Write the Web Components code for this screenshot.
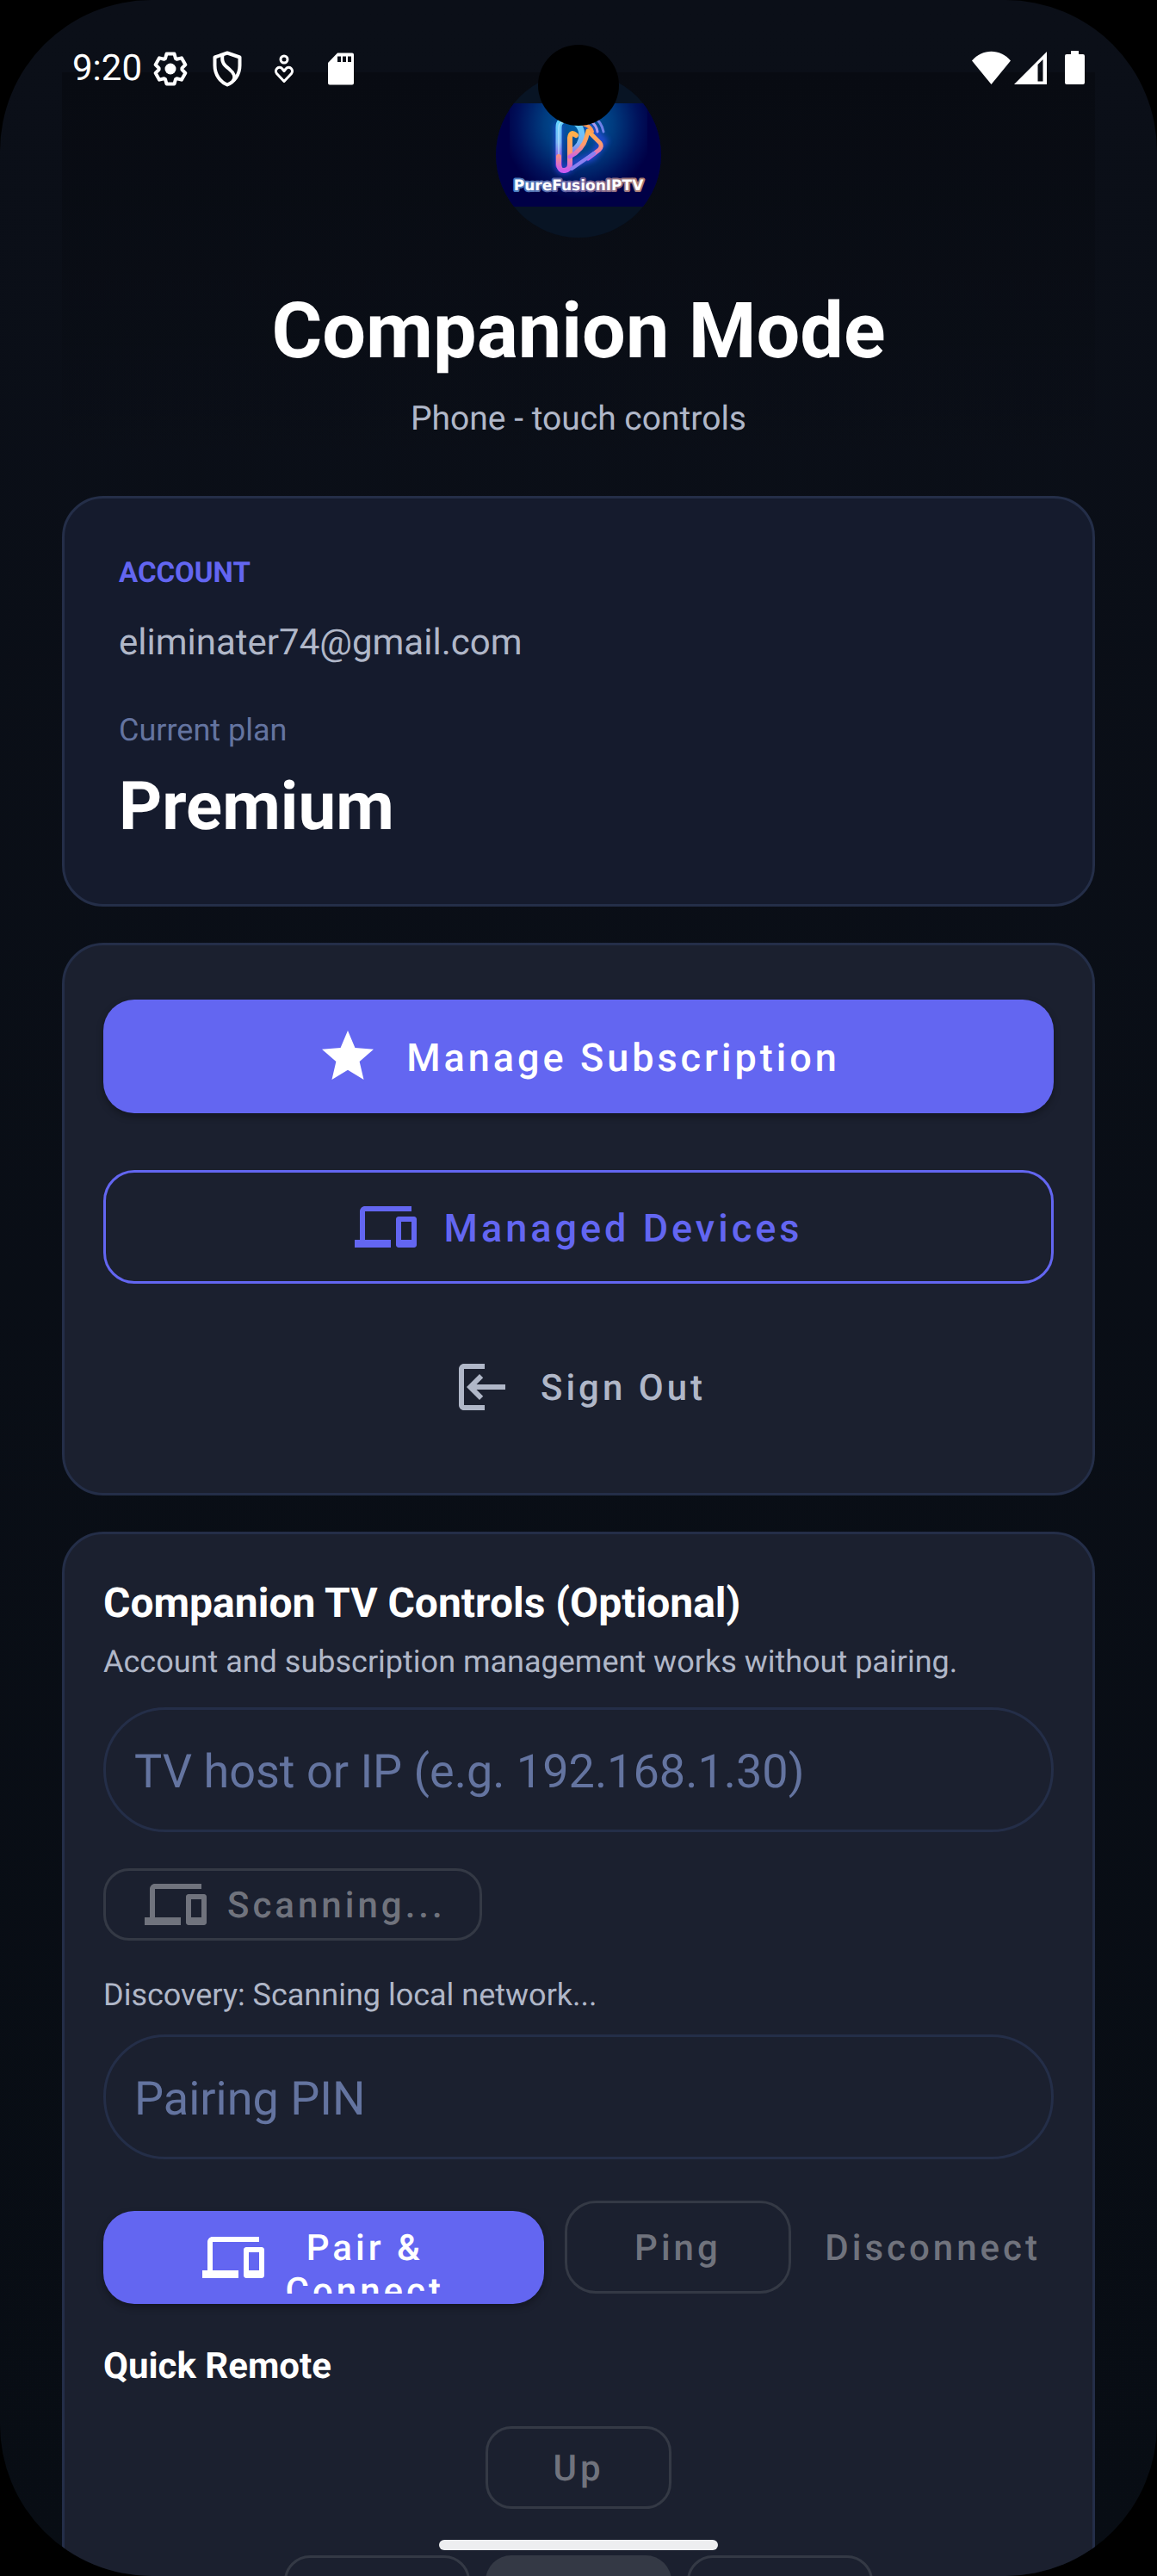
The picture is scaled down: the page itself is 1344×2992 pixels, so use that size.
<!DOCTYPE html>
<html lang="en">
<head>
<meta charset="utf-8">
<meta name="viewport" content="width=device-width, initial-scale=1">
<title>Companion Mode</title>
<style>
    html,
    body {
        margin: 0;
        height: 100%;
        background: #000;
    }

    body {
        font-family: Roboto, "Noto Sans", sans-serif;
        color: #fff;
        text-rendering: geometricPrecision;
    }
</style>
</head>
<body>
<companion-app></companion-app>

<script>
/**
 * Companion mode screen.
 *
 *   <companion-app>    the whole screen
 *   <phone-shell>      rounded display with camera, status bar and home handle
 *   <surface-card>     bordered panel, tone="account" for the bluer one
 *   <app-button>       variant: filled | outlined | text, optional icon
 *   <text-field>       pill shaped input
 *   <app-icon>         glyph by name
 */

const ICONS = {
    star: `<path d="M12 17.27 18.18 21l-1.64-7.03L22 9.24l-7.19-.61L12 2 9.19 8.63 2 9.24l5.46 4.73L5.82 21z"/>`,
    devices: `<path d="M4 6h18V4H4c-1.100 0-2 .9-2 2v11H0v3h14v-3H4V6zm19 2h-6c-.55 0-1 .45-1 1v10c0 .55.45 1 1 1h6c.55 0 1-.45 1-1V9c0-.55-.45-1-1-1zm-1 9h-4v-7h4v7z"/>`,
    logout: `<path d="M13 3H5c-1.100 0-2 .9-2 2v14c0 1.100.9 2 2 2h8v-2H5V5h8z"/><path d="M21 11H9.830l2.580-2.590L11 7l-5 5 5 5 1.410-1.410L9.830 13H21z"/>`,
};

function define(name, html, setup) {
    const template = document.createElement("template");
    template.innerHTML = html;
    customElements.define(name, class extends HTMLElement {
        constructor() {
            super();
            this.attachShadow({ mode: "open" });
            this.shadowRoot.appendChild(template.content.cloneNode(true));
        }

        connectedCallback() {
            if (setup) setup(this, this.shadowRoot);
        }
    });
}

define("app-icon", `
<style>
    :host {
        display: block;
        flex-shrink: 0;
        width: 72px;
        height: 72px;
    }

    svg {
        display: block;
        width: 100%;
        height: 100%;
        fill: currentColor;
    }
</style>
<svg viewBox="0 0 24 24" aria-hidden="true"></svg>
`, (host, root) => {
    root.querySelector("svg").innerHTML = ICONS[host.getAttribute("name")] || "";
});

define("app-button", `
<style>
    :host {
        display: block;
    }

    button {
        display: flex;
        align-items: center;
        justify-content: center;
        gap: 32px;
        box-sizing: border-box;
        width: 100%;
        height: 108px;
        margin: 0;
        padding: 0 12px;
        border: 3px solid transparent;
        border-radius: 36px;
        background: none;
        color: #b0b7c8;
        font: 500 42px/50px Roboto, sans-serif;
        letter-spacing: 4px;
        text-rendering: inherit;
    }

    .label {
        align-self: center;
        padding-top: 4px;
        overflow: hidden;
    }

    :host([size="large"]) button {
        height: 132px;
        font-size: 45px;
    }

    :host([size="small"]) button {
        height: 96px;
        border-radius: 30px;
    }

    :host([size="chip"]) button {
        height: 84px;
        gap: 24px;
        padding: 0 39px 0 45px;
        border-radius: 30px;
    }

    :host([variant="filled"]) button {
        border: 0;
        background: #6366f1;
        color: #fff;
        box-shadow: 0 4px 8px rgba(0, 0, 0, 0.3);
    }

    :host([variant="outlined"]) button {
        border-color: #6366f1;
        color: #6366f1;
    }

    :host button:disabled {
        color: #70737d;
    }

    :host([variant="outlined"]) button:disabled {
        border-color: #343945;
    }

    :host([variant="filled"]) button:disabled {
        background: #343945;
        box-shadow: none;
    }

    /* two-line label that runs out of room */
    :host([wrap]) button {
        gap: 24px;
        padding: 12px 115px;
    }

    :host([wrap]) .label {
        align-self: baseline;
        height: 84px;
        box-sizing: border-box;
        padding-top: 7px;
    }
</style>
<button type="button"><span class="label"><slot></slot></span></button>
`, (host, root) => {
    const button = root.querySelector("button");
    button.disabled = host.hasAttribute("off");
    const name = host.getAttribute("icon");
    if (name && !root.querySelector("app-icon")) {
        const icon = document.createElement("app-icon");
        icon.setAttribute("name", name);
        button.prepend(icon);
    }
});

define("text-field", `
<style>
    :host {
        display: block;
    }

    input {
        display: block;
        box-sizing: border-box;
        width: 100%;
        height: 145px;
        margin: 0;
        padding: 6px 33px 0;
        border: 3px solid #242e48;
        border-radius: 72px;
        outline: 0;
        background: none;
        color: #fff;
        font: 400 54px/64px Roboto, sans-serif;
        text-rendering: inherit;
    }

    input::placeholder {
        color: #6474a0;
        opacity: 1;
    }
</style>
<input type="text">
`, (host, root) => {
    const input = root.querySelector("input");
    input.placeholder = host.getAttribute("label");
    input.setAttribute("aria-label", host.getAttribute("label"));
});

define("surface-card", `
<style>
    :host {
        display: flex;
        flex-direction: column;
        box-sizing: border-box;
        padding: 63px 45px 69px;
        border: 3px solid #242e48;
        border-radius: 48px;
        background: #1b202f;
    }

    :host([tone="account"]) {
        padding: 67px 63px 66px;
        background: #151b2d;
    }

    :host([tone="controls"]) {
        padding-top: 52px;
    }
</style>
<slot></slot>
`);

define("app-logo", `
<style>
    :host {
        display: block;
        width: 192px;
        height: 192px;
        border-radius: 50%;
        overflow: hidden;
        background: #081424;
    }

    svg {
        display: block;
        width: 100%;
        height: 100%;
    }

    text {
        font: 700 17px "DejaVu Sans", sans-serif;
    }
</style>
<svg viewBox="0 0 192 192" role="img" aria-label="PureFusionIPTV">
    <defs>
        <radialGradient id="glow" cx="96" cy="60" r="88" gradientUnits="userSpaceOnUse">
            <stop offset="0" stop-color="#0060a8"/>
            <stop offset="0.45" stop-color="#003c80"/>
            <stop offset="0.8" stop-color="#00115a"/>
            <stop offset="1" stop-color="#000046"/>
        </radialGradient>
        <linearGradient id="cool" x1="0" y1="0" x2="0" y2="1">
            <stop offset="0" stop-color="#5fd6ff"/>
            <stop offset="0.5" stop-color="#78b4f5"/>
            <stop offset="1" stop-color="#9a2fe0"/>
        </linearGradient>
        <linearGradient id="warm" x1="0" y1="0" x2="0" y2="1">
            <stop offset="0" stop-color="#ffb04a"/>
            <stop offset="0.5" stop-color="#ff9a70"/>
            <stop offset="1" stop-color="#c95cf0"/>
        </linearGradient>
        <linearGradient id="rim" x1="0" x2="1">
            <stop offset="0" stop-color="#4a7fc0"/>
            <stop offset="0.5" stop-color="#6a5a98"/>
            <stop offset="1" stop-color="#b08070"/>
        </linearGradient>
        <filter id="halo" x="-30%" y="-30%" width="160%" height="160%">
            <feGaussianBlur stdDeviation="3"/>
        </filter>
    </defs>
    <rect y="36" width="192" height="120" fill="#000046"/>
    <rect x="16" y="36" width="160" height="120" fill="url(#glow)"/>
    <path d="M73 60v47q0 7 7 7 5-1 6-7l26-9 13-18-20-20" fill="none" stroke="#3a50ff" stroke-width="9" opacity=".6" filter="url(#halo)"/>
    <g fill="none" stroke-linecap="round" stroke-linejoin="round">
        <path d="M73 108V64q0-9 9-9 16 1 18 17 0 13-12 20" stroke="url(#cool)" stroke-width="7"/>
        <path d="M73 106V64q0-7 6-6" stroke="#c4efff" stroke-width="1"/>
        <path d="M73 98v9q1 8 7 7 6-1 6-7V76q1-8 7-3" stroke="url(#warm)" stroke-width="6"/>
        <path d="M86 98q15-8 19-22l2-8 14 14q3 4-1 8l-13 10" stroke="url(#warm)" stroke-width="5"/>
        <path d="M88 112l26-18" stroke="#8a80f0" stroke-width="4"/>
        <path d="M101 60q9 2 11 9" stroke="#ff9a55" stroke-width="4"/>
        <path d="M109 56q8 5 9 13" stroke="#a898f0" stroke-width="3"/>
        <path d="M114 52q9 6 11 17" stroke="#6e80e8" stroke-width="3"/>
    </g>
    <text x="96" y="137" text-anchor="middle" fill="#fff" stroke="url(#rim)" stroke-width="4" stroke-linejoin="round" paint-order="stroke">PureFusionIPTV</text>
</svg>
`);

define("status-bar", `
<style>
    :host {
        display: flex;
        align-items: center;
        justify-content: space-between;
        box-sizing: border-box;
        height: 160px;
        padding: 0 84px;
        font-size: 42px;
        line-height: 50px;
    }

    .group {
        display: flex;
        align-items: center;
        gap: 18px;
    }

    .right {
        gap: 0;
    }

    time {
        margin-right: -9px;
    }

    svg {
        display: block;
        height: 48px;
        fill: #fff;
    }

    .line {
        fill: none;
        stroke: #fff;
        stroke-width: 4;
        stroke-linejoin: round;
    }
</style>
<div class="group">
    <time>9:20</time>
    <svg viewBox="0 0 48 48" width="48" aria-hidden="true">
        <path class="line" d="M19.500 6.500h9L30 12l1.400.8 5.500-1.450 4.500 7.800-4 4.050v1.600l4 4.050-4.500 7.800-5.500-1.450L30 36l-1.500 5.500h-9L18 36l-1.400-.8-5.500 1.450-4.500-7.800 4-4.050v-1.600l-4-4.050 4.500-7.800 5.500 1.450L18 12z"/>
        <circle cx="24" cy="24" r="6.500"/>
    </svg>
    <svg viewBox="0 0 48 48" width="48" aria-hidden="true">
        <path class="line" d="M24 5.500 38.500 10.500V20C38.500 31 32 39 24 42.500 16 39 9.500 31 9.500 20v-9.500z"/>
        <path class="line" d="M18.500 8C17 17 21 20 26 24c6 5 8 9 5 14"/>
    </svg>
    <svg viewBox="0 0 48 48" width="48" aria-hidden="true">
        <g class="line" style="stroke-width: 3">
            <circle cx="24" cy="13" r="4"/>
            <path d="M24 38.500 15.500 29.500C12 25 18 19.500 22 24l2 2.500 2-2.500c4-4.500 10 1 6.500 5.500z"/>
        </g>
    </svg>
    <svg viewBox="0 0 48 48" width="48" aria-hidden="true">
        <path fill-rule="evenodd" d="M20 5.500h17q2 0 2 2v33q0 2-2 2H11q-2 0-2-2V17zM20 9.500V16h4V9.500zm6 0V16h4V9.500zm6 0V16h4V9.500z"/>
    </svg>
</div>
<div class="group right">
    <svg viewBox="0 0 48 48" width="48" aria-hidden="true">
        <path d="M1 14.500C13 0 34 0 46 14.500L23.500 42z"/>
    </svg>
    <svg viewBox="0 0 42 48" width="42" aria-hidden="true">
        <path fill-rule="evenodd" d="M2 42 40 4v38zM29.500 19v19.500h6v-25.500z"/>
    </svg>
    <svg viewBox="0 0 42 48" width="42" aria-hidden="true">
        <path d="M26 3h9v4h5q2 0 2 2v31q0 2-2 2H21q-2 0-2-2V9q0-2 2-2h5z"/>
    </svg>
</div>
`);

define("phone-shell", `
<style>
    :host {
        display: block;
        position: relative;
        height: 100vh;
        overflow: hidden;
        border-radius: 176px;
        background: linear-gradient(#0b0f18, #080d14);
    }

    /* system chrome floats over the scrolled page */
    status-bar {
        position: absolute;
        inset: 0 0 auto;
    }

    .camera {
        position: absolute;
        top: 52px;
        left: 50%;
        width: 94px;
        height: 94px;
        margin-left: -47px;
        border-radius: 50%;
        background: #000;
    }

    .handle {
        position: absolute;
        bottom: 30px;
        left: 50%;
        width: 324px;
        height: 12px;
        margin-left: -162px;
        border-radius: 6px;
        background: #edeef0;
    }
</style>
<slot></slot>
<status-bar></status-bar>
<div class="camera"></div>
<div class="handle"></div>
`);

define("companion-app", `
<style>
    :host {
        display: block;
    }

    main {
        display: flex;
        flex-direction: column;
        gap: 42px;
        padding: 84px 72px 0;
    }

    header {
        display: flex;
        flex-direction: column;
        align-items: center;
        padding-bottom: 25px;
        background: linear-gradient(#080b12, #080b1200);
    }

    h1,
    h2,
    h3,
    p {
        margin: 0;
    }

    h1 {
        margin-top: 56px;
        font-size: 90px;
        line-height: 106px;
    }

    .subtitle {
        margin-top: 25px;
        color: #b0b7c8;
        font-size: 39px;
        line-height: 46px;
    }

    .overline {
        color: #6366f1;
        font-size: 33px;
        font-weight: 700;
        line-height: 40px;
    }

    .email {
        margin-top: 36px;
        color: #b0b7c8;
        font-size: 42px;
        line-height: 50px;
    }

    .caption {
        margin-top: 55px;
        color: #6474a0;
        font-size: 36px;
        line-height: 42px;
    }

    .plan {
        margin-top: 23px;
        font-size: 78px;
        font-weight: 700;
        line-height: 92px;
    }

    .actions {
        display: flex;
        flex-direction: column;
        gap: 66px;
    }

    h2 {
        font-size: 48px;
        line-height: 56px;
    }

    .note {
        margin-top: 18px;
        color: #b0b7c8;
        font-size: 36px;
        line-height: 44px;
    }

    .host {
        margin-top: 31px;
    }

    .scan {
        align-self: flex-start;
        margin-top: 42px;
    }

    .status {
        margin-top: 41px;
    }

    .pin {
        margin-top: 24px;
    }

    .pairing {
        display: grid;
        grid-template-columns: 512fr 264fr 280fr;
        align-items: baseline;
        gap: 24px;
        margin-top: 48px;
    }

    h3 {
        margin-top: 48px;
        font-size: 42px;
        line-height: 50px;
    }

    .remote {
        display: grid;
        grid-template-columns: repeat(3, 216px);
        justify-content: center;
        gap: 54px 18px;
        margin-top: 44px;
    }

    .up {
        grid-column: 2;
    }

    .left {
        grid-column: 1;
    }
</style>
<phone-shell>
    <main>
        <header>
            <app-logo></app-logo>
            <h1>Companion Mode</h1>
            <p class="subtitle">Phone - touch controls</p>
        </header>

        <surface-card tone="account">
            <p class="overline">ACCOUNT</p>
            <p class="email">eliminater74@gmail.com</p>
            <p class="caption">Current plan</p>
            <p class="plan">Premium</p>
        </surface-card>

        <surface-card>
            <div class="actions">
                <app-button variant="filled" size="large" icon="star">Manage Subscription</app-button>
                <app-button variant="outlined" size="large" icon="devices">Managed Devices</app-button>
                <app-button variant="text" icon="logout">Sign Out</app-button>
            </div>
        </surface-card>

        <surface-card tone="controls">
            <h2>Companion TV Controls (Optional)</h2>
            <p class="note">Account and subscription management works without pairing.</p>
            <text-field class="host" label="TV host or IP (e.g. 192.168.1.30)"></text-field>
            <app-button class="scan" variant="outlined" size="chip" icon="devices" off>Scanning...</app-button>
            <p class="note status">Discovery: Scanning local network...</p>
            <text-field class="pin" label="Pairing PIN"></text-field>
            <div class="pairing">
                <app-button variant="filled" icon="devices" wrap>Pair &amp; Connect</app-button>
                <app-button variant="outlined" off>Ping</app-button>
                <app-button variant="text" off>Disconnect</app-button>
            </div>
            <h3>Quick Remote</h3>
            <div class="remote">
                <app-button class="up" variant="outlined" size="small" off>Up</app-button>
                <app-button class="left" variant="outlined" size="small" off></app-button>
                <app-button variant="filled" size="small" off></app-button>
                <app-button variant="outlined" size="small" off></app-button>
            </div>
        </surface-card>
    </main>
</phone-shell>
`);
</script>
</body>
</html>
